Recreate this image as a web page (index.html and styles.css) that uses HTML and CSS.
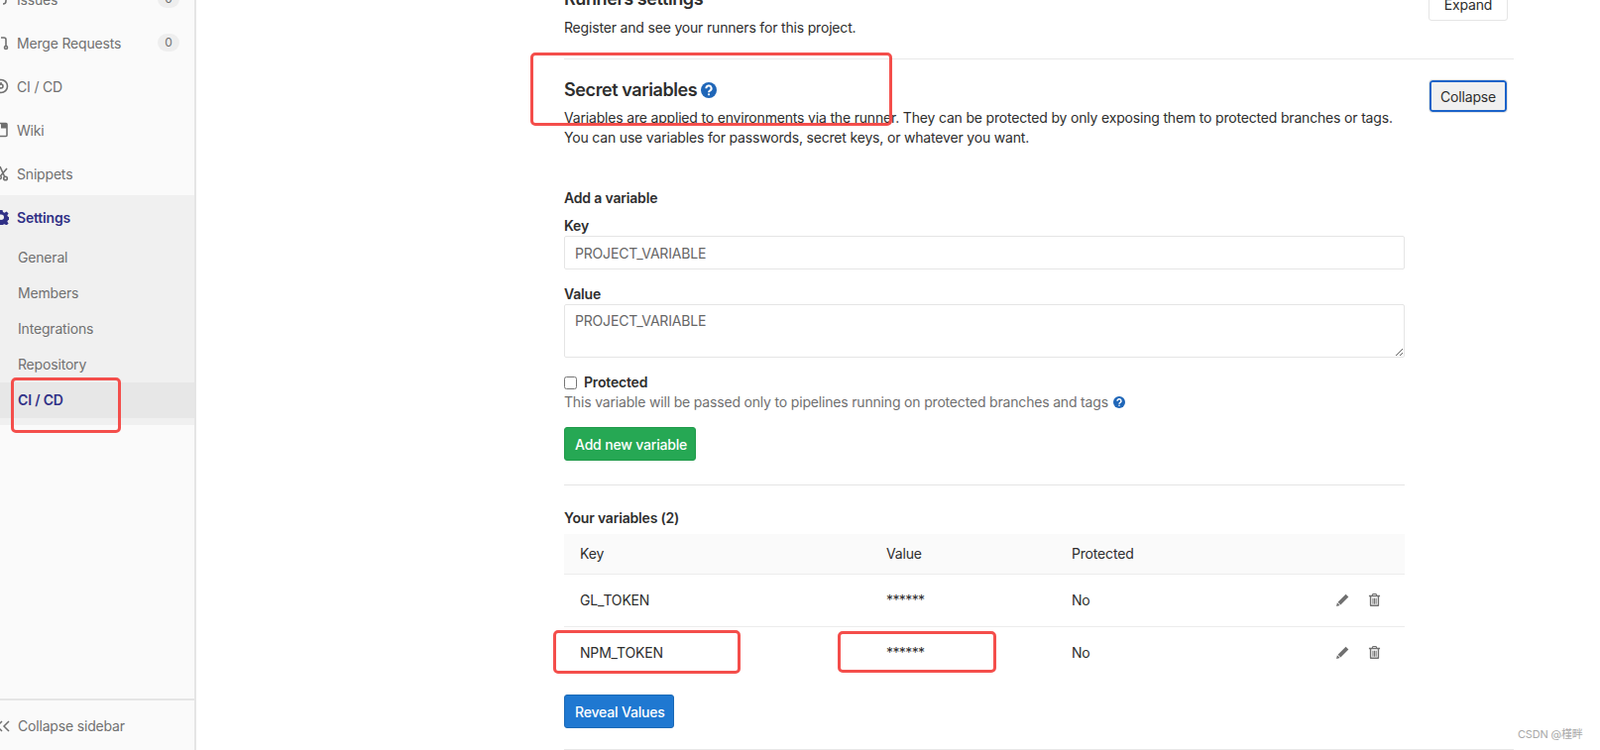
FILE: index.html
```html
<!DOCTYPE html>
<html lang="en">
<head>
  <meta charset="UTF-8" />
  <title>CI / CD Settings</title>
  <link rel="stylesheet" href="styles.css">
</head>
<body>
  <aside class="sidebar">
    <nav class="nav">
      <a class="nav-link"><svg class="nav-icon" viewBox="0 0 16 16"><path d="M3 2v8a3 3 0 0 0 3 3M13 2v8a3 3 0 0 1-3 3M6 3v6M10 3v6"/></svg>Issues<span class="badge">0</span></a>
      <a class="nav-link"><svg class="nav-icon" viewBox="0 0 16 16"><circle cx="3" cy="3" r="1.5"/><circle cx="3" cy="13" r="1.5"/><circle cx="13" cy="13" r="1.5"/><path d="M3 4.500v7M8 3h3a2 2 0 0 1 2 2v6.500"/></svg>Merge Requests<span class="badge">0</span></a>
      <a class="nav-link"><svg class="nav-icon" viewBox="0 0 16 16"><circle cx="8" cy="8" r="6.500"/><circle cx="8" cy="8" r="2"/><path d="M8 4v2"/></svg>CI / CD</a>
      <a class="nav-link"><svg class="nav-icon" viewBox="0 0 16 16"><path d="M3 1.500h10a1 1 0 0 1 1 1v11a1 1 0 0 1-1 1H3a1 1 0 0 1-1-1v-11a1 1 0 0 1 1-1z"/><path class="fill" d="M8 1.500h6v5H8z"/></svg>Wiki</a>
      <a class="nav-link"><svg class="nav-icon" viewBox="0 0 16 16"><path d="M7 1l4.500 10M14 3L8 10"/><circle cx="12.500" cy="13" r="1.800"/><circle cx="6.500" cy="12" r="1.800"/></svg>Snippets</a>
      <div class="nav-group">
        <a class="nav-link nav-link-active"><svg class="nav-icon" viewBox="0 0 16 16"><path class="fill" fill-rule="evenodd" d="M6.500 0h3l.5 2.300 1.600.7 2-1.300 2 2.100-1.300 2 .7 1.600 2 .5v3l-2 .5-.7 1.600 1.300 2-2 2.100-2-1.300-1.600.7-.5 2.300h-3L6 13.700 4.400 13l-2 1.300-2-2.100 1.300-2L1 8.600-1 8V5l2-.5.7-1.600-1.300-2 2-2.100 2 1.300L6 .3zM8 5a3 3 0 1 0 0 6 3 3 0 0 0 0-6z" transform="translate(0 1) scale(1 .9)"/></svg>Settings</a>
        <ul class="subnav">
          <li class="subnav-item">General</li>
          <li class="subnav-item">Members</li>
          <li class="subnav-item">Integrations</li>
          <li class="subnav-item">Repository</li>
          <li class="subnav-item subnav-item-active">CI / CD</li>
        </ul>
      </div>
    </nav>
    <div class="collapse-bar">
      <svg class="collapse-icon" viewBox="0 0 16 16"><path d="M7 3L2 8l5 5M14 3L9 8l5 5"/></svg>
      Collapse sidebar
    </div>
  </aside>

  <main class="content">
    <section class="settings-block settings-runners">
      <div class="settings-head">
        <div>
          <h4 class="settings-title">Runners settings</h4>
          <p class="settings-desc">Register and see your runners for this project.</p>
        </div>
        <button class="btn-toggle">Expand</button>
      </div>
    </section>

    <section class="settings-block settings-secret">
      <div class="settings-head">
        <div class="settings-text">
          <h4 class="settings-title">Secret variables
            <svg class="help" viewBox="0 0 16 16"><circle cx="8" cy="8" r="8"/><path d="M5.400 6.200a2.600 2.600 0 1 1 3.900 2.200c-.9.500-1.300 1-1.300 1.800"/><circle class="dot" cx="8" cy="12.300" r="1.100"/></svg>
          </h4>
          <p class="settings-desc">Variables are applied to environments via the runner. They can be protected by only exposing them to protected branches or tags. You can use variables for passwords, secret keys, or whatever you want.</p>
        </div>
        <button class="btn-toggle btn-toggle-focus">Collapse</button>
      </div>

      <form class="var-form">
        <h5 class="form-heading">Add a variable</h5>
        <label class="field-label">Key</label>
        <input class="field-input" type="text" value="PROJECT_VARIABLE" />
        <label class="field-label field-label-value">Value</label>
        <textarea class="field-input field-textarea">PROJECT_VARIABLE</textarea>
        <label class="check-row"><input class="check-box" type="checkbox" />Protected</label>
        <p class="check-help">This variable will be passed only to pipelines running on protected branches and tags
          <svg class="help help-small" viewBox="0 0 16 16"><circle cx="8" cy="8" r="8"/><path d="M5.400 6.200a2.600 2.600 0 1 1 3.900 2.200c-.9.500-1.300 1-1.300 1.800"/><circle class="dot" cx="8" cy="12.300" r="1.100"/></svg>
        </p>
        <button class="btn btn-green" type="button">Add new variable</button>
      </form>

      <div class="var-list">
        <h5 class="form-heading">Your variables (2)</h5>
        <table class="var-table">
          <thead>
            <tr><th class="col-key">Key</th><th class="col-value">Value</th><th class="col-prot">Protected</th><th></th></tr>
          </thead>
          <tbody>
            <tr>
              <td>GL_TOKEN</td><td class="stars">******</td><td>No</td>
              <td class="col-actions">
                <svg class="act-icon" viewBox="0 0 14 14"><path d="M10.300.7l3 3-8.600 8.600-3-3zM1 10l3 3-4 1z"/></svg>
                <svg class="act-icon" viewBox="0 0 14 14"><path fill-rule="evenodd" d="M5 0h4l1 2h3v1.500h-1V13a1 1 0 0 1-1 1H3a1 1 0 0 1-1-1V3.500H1V2h3zm.7 1l-.4 1h3.400l-.4-1zM3.500 3.500v9h7v-9zM4.800 5h1.100v6.500H4.800zm1.700 0h1.100v6.500H6.500zm1.700 0h1.100v6.500H8.200z"/></svg>
              </td>
            </tr>
            <tr>
              <td>NPM_TOKEN</td><td class="stars">******</td><td>No</td>
              <td class="col-actions">
                <svg class="act-icon" viewBox="0 0 14 14"><path d="M10.300.7l3 3-8.600 8.600-3-3zM1 10l3 3-4 1z"/></svg>
                <svg class="act-icon" viewBox="0 0 14 14"><path fill-rule="evenodd" d="M5 0h4l1 2h3v1.500h-1V13a1 1 0 0 1-1 1H3a1 1 0 0 1-1-1V3.500H1V2h3zm.7 1l-.4 1h3.400l-.4-1zM3.500 3.500v9h7v-9zM4.800 5h1.100v6.500H4.800zm1.700 0h1.100v6.500H6.500zm1.700 0h1.100v6.500H8.200z"/></svg>
              </td>
            </tr>
          </tbody>
        </table>
        <button class="btn btn-blue" type="button">Reveal Values</button>
      </div>
    </section>
  </main>

  <!-- red annotation boxes drawn over the screenshot -->
  <div class="mark mark-title"></div>
  <div class="mark mark-nav"></div>
  <div class="mark mark-key"></div>
  <div class="mark mark-val"></div>
  <div class="watermark">CSDN @槿畔</div>
</body>
</html>
```

FILE: styles.css
```css
* {
  box-sizing: border-box;
}
html, body {
  height: 757px;
  overflow: hidden;
}
body {
  margin: 0;
  display: flex;
  position: relative;
  font-family: Inter, "Noto Sans CJK SC", sans-serif;
  font-size: 14px;
  letter-spacing: -0.18px;
  color: #2e2e2e;
  background: white;
}

/* sidebar */
.sidebar {
  width: 198px;
  height: 757px;
  flex: none;
  display: flex;
  flex-direction: column;
  background: #fafafa;
  border-right: 2px solid #e5e5e5;
  overflow: hidden;
}
.nav {
  flex: 1;
  margin-top: -23px;
}
.nav-link {
  display: flex;
  align-items: center;
  height: 44px;
  padding-right: 15px;
  margin-left: -7px;
  color: #707070;
  font-size: 14px;
}
.nav-icon {
  width: 16px;
  height: 16px;
  margin-right: 8px;
  flex: none;
  fill: none;
  stroke: #707070;
  stroke-width: 1.6;
}
.nav-icon .fill {
  fill: #707070;
  stroke: none;
}
.badge {
  margin-left: auto;
  width: 22px;
  height: 18px;
  border-radius: 9px;
  background: #eee;
  color: #707070;
  font-size: 12px;
  line-height: 18px;
  text-align: center;
}
.nav-group {
  background: #f0f0f0;
  padding-bottom: 7px;
}
.nav-link-active {
  color: #303086;
  font-weight: 600;
}
.nav-link-active .nav-icon .fill {
  fill: #303086;
}
.subnav {
  list-style: none;
  margin: 0;
  padding: 1px 0 0;
}
.subnav-item {
  height: 36px;
  line-height: 36px;
  padding-left: 18px;
  color: #707070;
}
.subnav-item-active {
  background: #e7e7e7;
  color: #303086;
  font-weight: 600;
}
.collapse-bar {
  height: 52px;
  flex: none;
  display: flex;
  align-items: center;
  border-top: 2px solid #e5e5e5;
  padding-left: 18px;
  color: #707070;
  position: relative;
}
.collapse-icon {
  position: absolute;
  left: -5px;
  top: 18px;
  width: 16px;
  height: 16px;
  fill: none;
  stroke: #707070;
  stroke-width: 1.5;
}

/* main column */
.content {
  width: 958px;
  margin-left: 371px;
  margin-top: -13px;
  flex: none;
}
.settings-block {
  border-bottom: 1px solid #e8e8e8;
}
.settings-runners {
  height: 73px;
}
.settings-secret {
  padding-top: 19px;
}
.settings-head {
  display: flex;
  justify-content: space-between;
  align-items: flex-start;
}
.settings-text {
  width: 850px;
}
.settings-title {
  margin: 0;
  font-size: 18px;
  line-height: 24px;
  font-weight: 600;
  letter-spacing: -0.4px;
  color: #2e2e2e;
  display: flex;
  align-items: center;
  gap: 4px;
}
.settings-desc {
  margin: 7px 0 0;
  line-height: 20px;
  font-size: 14px;
  color: #2e2e2e;
}
.settings-secret .settings-desc {
  margin-top: 6px;
}
.help {
  width: 16px;
  height: 16px;
  flex: none;
  fill: #1f66b8;
  stroke: none;
}
.help path {
  fill: none;
  stroke: white;
  stroke-width: 2;
}
.help .dot {
  fill: white;
}
.help-small {
  width: 12px;
  height: 12px;
  vertical-align: -1px;
  margin-left: 1px;
}
.btn-toggle {
  width: 80px;
  height: 34px;
  margin-right: 6px;
  background: white;
  border: 1px solid #e5e5e5;
  border-radius: 3px;
  font: inherit;
  letter-spacing: inherit;
  color: #2e2e2e;
}
.btn-toggle-focus {
  margin-top: 1px;
  background: #f0f0f0;
  box-shadow: inset 0 0 0 2px #1b63c9;
  border-radius: 4px;
}

/* add variable form */
.var-form {
  width: 848px;
  margin-top: 41px;
  padding-bottom: 24px;
  border-bottom: 1px solid #e5e5e5;
}
.form-heading {
  margin: 0;
  font-size: 14px;
  line-height: 20px;
  font-weight: 600;
  color: #2e2e2e;
}
.field-label {
  display: block;
  margin-top: 8px;
  line-height: 20px;
  font-weight: 600;
}
.field-label-value {
  margin-top: 15px;
}
.field-input {
  display: block;
  width: 100%;
  height: 34px;
  padding: 6px 10px;
  border: 1px solid #e5e5e5;
  border-radius: 2px;
  font: inherit;
  letter-spacing: inherit;
  line-height: 20px;
  color: #666;
  background: white;
  outline: none;
}
.field-textarea {
  height: 54px;
}
.check-row {
  display: flex;
  align-items: center;
  margin-top: 15px;
  line-height: 20px;
  font-weight: 600;
}
.check-box {
  width: 13px;
  height: 13px;
  margin: 0 7px 0 0;
}
.check-help {
  margin: 0;
  line-height: 20px;
  color: #707070;
}
.btn {
  display: block;
  height: 34px;
  padding: 0 10px;
  border-radius: 3px;
  font: inherit;
  letter-spacing: inherit;
  font-weight: 500;
  white-space: nowrap;
  color: white;
}
.btn-green {
  width: 133px;
  margin-top: 15px;
  background: #26a854;
  border: 1px solid #1f9a4a;
}
.btn-blue {
  width: 111px;
  margin-top: 16px;
  margin-bottom: 21px;
  background: #1f78d1;
  border: 1px solid #1b69b6;
}

/* variables table */
.var-list {
  width: 848px;
  padding-top: 23px;
}
.var-table {
  width: 100%;
  margin-top: 6px;
  border-collapse: collapse;
  table-layout: fixed;
}
.var-table th {
  height: 40px;
  background: #fafafa;
  font-weight: 400;
  text-align: left;
  padding: 0 16px;
  border-bottom: 1px solid #ececec;
}
.col-key {
  width: 309px;
}
.col-value {
  width: 187px;
}
.col-prot {
  width: 200px;
}
.var-table td {
  height: 53px;
  padding: 0 16px;
  border-bottom: 1px solid #ececec;
}
.var-table tr:last-child td {
  border-bottom: none;
}
.var-table .stars {
  letter-spacing: -0.6px;
}
.col-actions {
  text-align: right;
  white-space: nowrap;
}
.act-icon {
  width: 13px;
  height: 13px;
  margin-left: 7px;
  margin-right: 8px;
  vertical-align: -1px;
  fill: #707070;
}

/* overlays */
.mark {
  position: absolute;
  border: 3px solid #f44e4b;
  border-radius: 5px;
}
.mark-title {
  left: 535px;
  top: 53px;
  width: 365px;
  height: 74px;
}
.mark-nav {
  left: 11px;
  top: 381px;
  width: 111px;
  height: 56px;
}
.mark-key {
  left: 558px;
  top: 636px;
  width: 189px;
  height: 44px;
}
.mark-val {
  left: 845px;
  top: 637px;
  width: 160px;
  height: 42px;
}
.watermark {
  position: absolute;
  left: 1531px;
  top: 734px;
  font-size: 11px;
  line-height: 14px;
  color: #a8a8a8;
}
```
